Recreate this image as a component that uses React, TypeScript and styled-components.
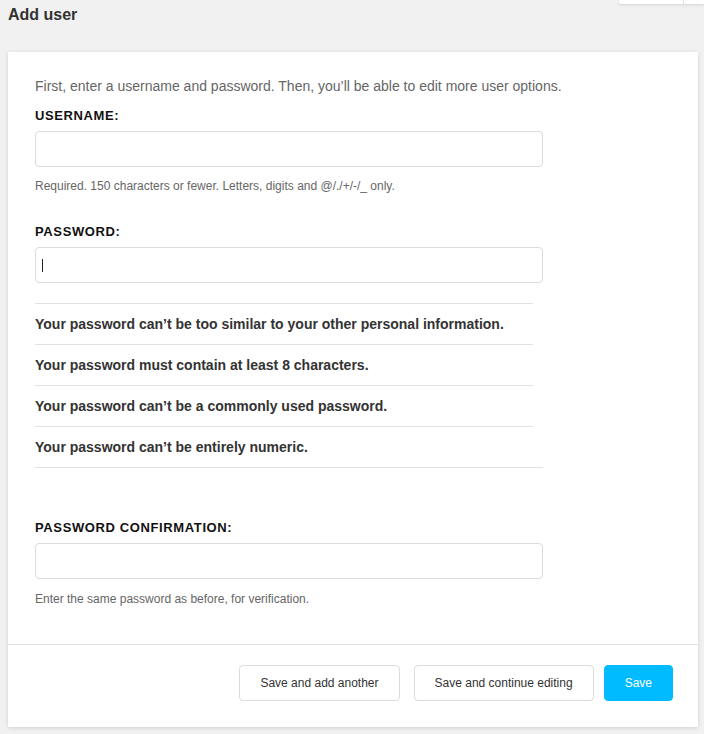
import React from "react";
import styled, { createGlobalStyle } from "styled-components";

const Global = createGlobalStyle`
  html, body { margin: 0; padding: 0; background: #f1f1f1; }
  body { font-family: "Liberation Sans", Arial, sans-serif; color: #333; }
  * { box-sizing: border-box; }
`;

const Page = styled.div`
  position: relative;
  padding: 6px 6px 7px 8px;
  min-height: 734px;
`;

const TopMenu = styled.div`
  position: absolute;
  top: 0;
  right: 0;
  width: 85px;
  height: 4px;
  background: #fff;
  box-shadow: 0 1px 3px rgba(0, 0, 0, 0.12);
  border-bottom-left-radius: 2px;
  display: flex;
  justify-content: flex-end;
`;

const TopMenuDivider = styled.span`
  width: 1px;
  height: 100%;
  background: #e2e2e2;
  margin-right: 20px;
`;

const Title = styled.h1`
  margin: 0 0 28px;
  font-size: 16px;
  line-height: 18px;
  font-weight: bold;
  color: #333;
`;

const Card = styled.form`
  width: 690px;
  background: #fff;
  box-shadow: 0 1px 4px rgba(0, 0, 0, 0.14);
  display: flex;
  flex-direction: column;
`;

const Body = styled.div`
  padding: 26px 27px 38px 27px;
  display: flex;
  flex-direction: column;
`;

const Intro = styled.p`
  margin: 0;
  font-size: 14px;
  line-height: 16px;
  color: #666;
`;

const Label = styled.label<{ $top: number }>`
  margin-top: ${(p) => p.$top}px;
  font-size: 13px;
  line-height: 16px;
  font-weight: bold;
  letter-spacing: 0.62px;
  color: #111;
  text-transform: uppercase;
`;

const FieldWrap = styled.div`
  position: relative;
  margin-top: 7px;
  width: 508px;
`;

const Input = styled.input`
  display: block;
  width: 100%;
  height: 36px;
  border: 1px solid #dcdcdc;
  border-radius: 4px;
  padding: 0 7px;
  font-family: inherit;
  font-size: 14px;
  background: #fff;
  outline: none;
`;

const Caret = styled.span`
  position: absolute;
  left: 7px;
  top: 12px;
  width: 1px;
  height: 13px;
  background: #222;
`;

const Help = styled.div<{ $top?: number }>`
  margin-top: ${(p) => p.$top ?? 12}px;
  font-size: 12px;
  line-height: 14px;
  color: #666;
`;

const Rules = styled.ul`
  list-style: none;
  margin: 20px 0 0;
  padding: 0;
  width: 508px;
  border-bottom: 1px solid #e2e2e2;
`;

const Rule = styled.li`
  margin-right: 10px;
  border-top: 1px solid #e2e2e2;
  height: 41px;
  display: flex;
  align-items: center;
  font-size: 14px;
  font-weight: bold;
  color: #333;
`;

const Footer = styled.div`
  border-top: 1px solid #e2e2e2;
  padding: 20px 25px 26px;
  display: flex;
  justify-content: flex-end;
  gap: 10px;
`;

const Button = styled.button<{ $primary?: boolean; $extra?: number }>`
  height: 36px;
  padding: 0 20px;
  margin-right: ${(p) => p.$extra || 0}px;
  border: 1px solid ${(p) => (p.$primary ? "#00bbff" : "#dcdcdc")};
  border-radius: 4px;
  background: ${(p) => (p.$primary ? "#00bbff" : "#fff")};
  color: ${(p) => (p.$primary ? "#fff" : "#333")};
  font-family: inherit;
  font-size: 12px;
  cursor: pointer;
`;

const rules = [
  "Your password can’t be too similar to your other personal information.",
  "Your password must contain at least 8 characters.",
  "Your password can’t be a commonly used password.",
  "Your password can’t be entirely numeric.",
];

export default function App() {
  return (
    <>
      <Global />
      <Page>
        <TopMenu>
          <TopMenuDivider />
        </TopMenu>
        <Title>Add user</Title>
        <Card onSubmit={(e) => e.preventDefault()}>
          <Body>
            <Intro>
              First, enter a username and password. Then, you’ll be able to edit more user options.
            </Intro>
            <Label $top={14} htmlFor="username">Username:</Label>
            <FieldWrap>
              <Input id="username" type="text" />
            </FieldWrap>
            <Help>Required. 150 characters or fewer. Letters, digits and @/./+/-/_ only.</Help>
            <Label $top={31} htmlFor="password1">Password:</Label>
            <FieldWrap>
              <Input id="password1" type="password" />
              <Caret />
            </FieldWrap>
            <Rules>
              {rules.map((r) => (
                <Rule key={r}>{r}</Rule>
              ))}
            </Rules>
            <Label $top={52} htmlFor="password2">Password confirmation:</Label>
            <FieldWrap>
              <Input id="password2" type="password" />
            </FieldWrap>
            <Help $top={13}>Enter the same password as before, for verification.</Help>
          </Body>
          <Footer>
            <Button type="button" $extra={4}>Save and add another</Button>
            <Button type="button">Save and continue editing</Button>
            <Button type="submit" $primary>Save</Button>
          </Footer>
        </Card>
      </Page>
    </>
  );
}
